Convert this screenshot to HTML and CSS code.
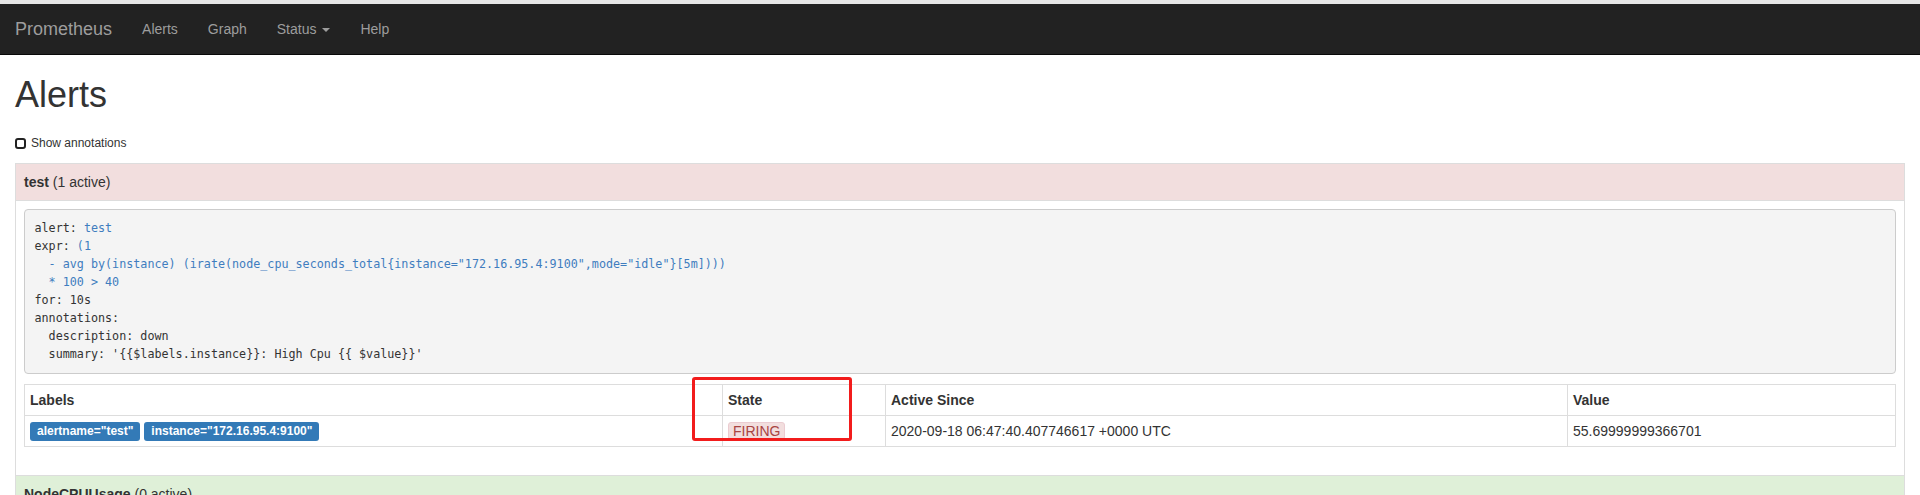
FILE: index.html
```html
<!DOCTYPE html>
<html>
<head>
<meta charset="utf-8">
<title>Prometheus Time Series Collection and Processing Server</title>
<link rel="stylesheet" href="styles.css">
</head>
<body>
<div class="topstrip"></div>
<nav class="navbar">
  <a class="brand">Prometheus</a>
  <ul class="nav">
    <li><a>Alerts</a></li>
    <li><a>Graph</a></li>
    <li><a>Status <span class="caret"></span></a></li>
    <li><a>Help</a></li>
  </ul>
</nav>
<main class="container">
  <h1>Alerts</h1>
  <div class="show-annotations">
    <span class="checkbox"></span><span class="show-label">Show annotations</span>
  </div>
  <table class="alerts">
    <tbody>
      <tr class="danger"><td><b>test</b> (1 active)</td></tr>
      <tr>
        <td class="alert-body">
<pre><code><span class="k">alert:</span> <span class="v">test</span>
<span class="k">expr:</span> <span class="v">(1</span>
<span class="v">  - avg by(instance) (irate(node_cpu_seconds_total{instance="172.16.95.4:9100",mode="idle"}[5m])))</span>
<span class="v">  * 100 &gt; 40</span>
<span class="k">for: 10s</span>
<span class="k">annotations:</span>
<span class="k">  description: down</span>
<span class="k">  summary: '{{$labels.instance}}: High Cpu {{ $value}}'</span></code></pre>
          <table class="details">
            <thead>
              <tr>
                <th class="c-labels">Labels</th>
                <th class="c-state">State</th>
                <th class="c-since">Active Since</th>
                <th class="c-value">Value</th>
              </tr>
            </thead>
            <tbody>
              <tr>
                <td><span class="label">alertname="test"</span> <span class="label">instance="172.16.95.4:9100"</span></td>
                <td><span class="state-firing">FIRING</span></td>
                <td>2020-09-18 06:47:40.407746617 +0000 UTC</td>
                <td>55.69999999366701</td>
              </tr>
            </tbody>
          </table>
        </td>
      </tr>
    </tbody>
    <tbody>
      <tr class="success"><td><b>NodeCPUUsage</b> (0 active)</td></tr>
    </tbody>
  </table>
</main>
<div class="highlight-box"></div>
</body>
</html>
```
FILE: styles.css
```css
* { box-sizing: border-box; }
html, body { margin: 0; padding: 0; }
body {
  font-family: "Liberation Sans", Arial, Helvetica, sans-serif;
  font-size: 14px;
  line-height: 1.42857;
  color: #333;
  background: #fff;
  position: relative;
}
.topstrip { height: 4px; background: #e6e6e6; }
.navbar {
  height: 51px;
  background: #222;
  border-bottom: 1px solid #080808;
  display: flex;
  align-items: center;
  padding: 0 15px;
}
.brand {
  font-size: 18px;
  line-height: 20px;
  color: #9d9d9d;
  padding-right: 15px;
}
.nav {
  display: flex;
  list-style: none;
  margin: 0;
  padding: 0;
}
.nav a {
  display: block;
  padding: 15px;
  line-height: 20px;
  color: #9d9d9d;
}
.caret {
  display: inline-block;
  width: 0;
  height: 0;
  margin-left: 2px;
  vertical-align: middle;
  border-top: 4px solid #9d9d9d;
  border-left: 4px solid transparent;
  border-right: 4px solid transparent;
}
.container { padding: 0 15px; }
h1 {
  font-size: 36px;
  font-weight: 500;
  line-height: 1.1;
  margin: 20px 0 0;
}
.show-annotations {
  display: flex;
  align-items: center;
  height: 20px;
  margin: 19px 0 9px;
  font-size: 12px;
}
.checkbox {
  width: 11px;
  height: 11px;
  border: 2px solid #222;
  border-radius: 3px;
  margin-right: 5px;
}
table { border-collapse: collapse; border-spacing: 0; width: 100%; }
.alerts > tbody > tr > td {
  border: 1px solid #ddd;
  padding: 8px;
  line-height: 20px;
}
.alerts tr.danger > td { background: #f2dede; }
.alerts tr.success > td { background: #dff0d8; }
pre {
  margin: 0 0 10px;
  padding: 9.5px;
  background: #f4f4f4;
  border: 1px solid #ccc;
  border-radius: 4px;
  font-family: "DejaVu Sans Mono", monospace;
  font-size: 11.73px;
  line-height: 18px;
  color: #333;
  white-space: pre;
}
pre .v { color: #3f7dbf; }
.details {
  table-layout: fixed;
  margin-bottom: 20px;
}
.details th, .details td {
  border: 1px solid #ddd;
  padding: 5px;
  line-height: 20px;
  text-align: left;
  vertical-align: top;
}
.details th { font-weight: bold; }
.c-labels { width: 698px; }
.c-state { width: 163px; }
.c-since { width: 682px; }
.label {
  display: inline-block;
  background: #337ab7;
  color: #fff;
  font-size: 12px;
  font-weight: bold;
  line-height: 1;
  padding: 3px 7px 4px;
  border-radius: 3px;
  vertical-align: 1px;
}
.state-firing {
  display: inline-block;
  background: #f2dede;
  color: #a94442;
  border: 1px solid #ebccd1;
  border-radius: 3px;
  padding: 0 4px;
  line-height: 16px;
}
.highlight-box {
  position: absolute;
  left: 692px;
  top: 377px;
  width: 160px;
  height: 64px;
  border: 3px solid #f21c1c;
  border-radius: 3px;
}
```
